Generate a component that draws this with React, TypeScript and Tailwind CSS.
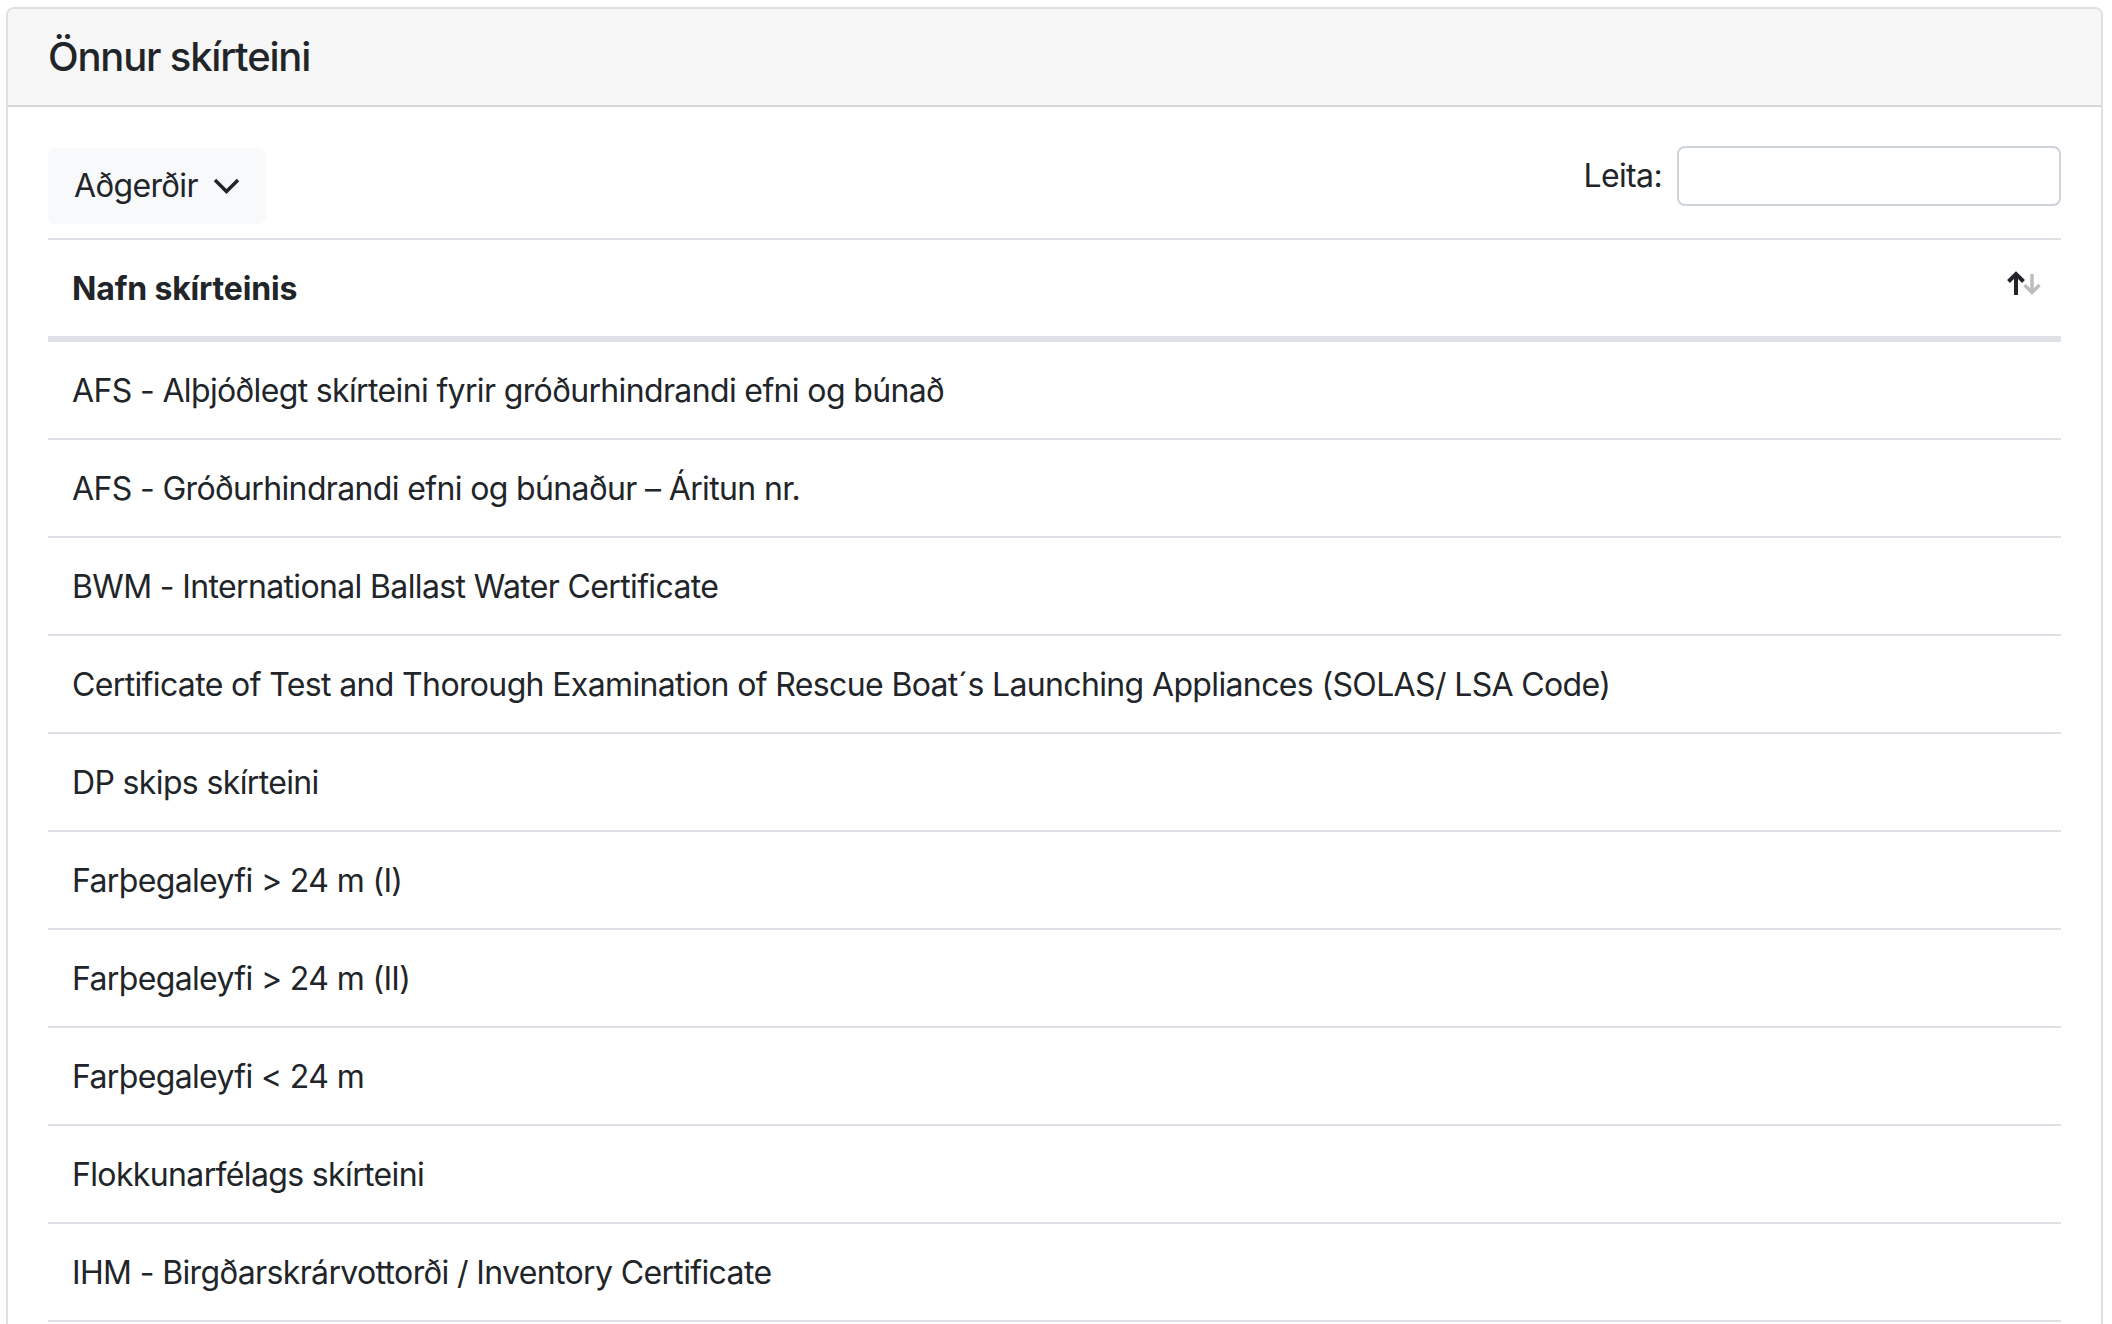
const rows = [
  'AFS - Alþjóðlegt skírteini fyrir gróðurhindrandi efni og búnað',
  'AFS - Gróðurhindrandi efni og búnaður – Áritun nr.',
  'BWM - International Ballast Water Certificate',
  'Certificate of Test and Thorough Examination of Rescue Boat´s Launching Appliances (SOLAS/ LSA Code)',
  'DP skips skírteini',
  'Farþegaleyfi > 24 m (I)',
  'Farþegaleyfi > 24 m (II)',
  'Farþegaleyfi < 24 m',
  'Flokkunarfélags skírteini',
  'IHM - Birgðarskrárvottorði / Inventory Certificate',
];

function SortArrows() {
  return (
    <div aria-hidden="true" className="mb-[12px] mr-[-6px] flex items-end">
      <svg width="20" height="24" viewBox="0 0 20 24" fill="none">
        <path d="M10 24V3" stroke="#212529" strokeWidth="4" />
        <path d="M2.5 10.5L10 3l7.5 7.5" stroke="#212529" strokeWidth="4" />
      </svg>
      <svg width="22" height="21" viewBox="0 0 22 21" fill="none" className="-ml-[5px]">
        <path d="M11 0v18.5" stroke="#bdbdbd" strokeWidth="3.5" />
        <path d="M3.5 11l7.5 7.5 7.5-7.5" stroke="#bdbdbd" strokeWidth="3.5" />
      </svg>
    </div>
  );
}

export default function App() {
  return (
    <div
      className="min-h-screen bg-white pl-[6px] pr-[9px] pt-[7px] text-[#212529]"
      style={{ fontFamily: 'Inter, "Noto Sans", sans-serif' }}
    >
      <div className="overflow-hidden rounded-[8px] border-2 border-[#e0e0e0]">
        <div className="border-b-2 border-[#d6d6d6] bg-[#f7f7f7] px-[40px] py-[24px]">
          <h5 className="text-[40px] font-medium leading-[48px] tracking-[-0.03em]">Önnur skírteini</h5>
        </div>

        <div className="px-[40px] pb-[60px] pt-[41px]">
          <div className="flex items-start justify-between">
            <button className="flex h-[76px] items-center rounded-[8px] border-2 border-[#f8f9fa] bg-[#f8f9fa] px-[24px] text-[32px] leading-[48px] tracking-[-0.02em]">
              Aðgerðir
              <svg width="27" height="16" viewBox="0 0 27 16" fill="none" className="ml-[15px]">
                <path d="M2 2l11.5 11.5L25 2" stroke="#212529" strokeWidth="3.5" />
              </svg>
            </button>

            <label className="-mt-[2px] flex items-center text-[32px] leading-[60px] tracking-[-0.02em]">
              Leita:
              <input
                type="search"
                className="ml-[15px] h-[60px] w-[384px] rounded-[8px] border-2 border-[#ced4da] bg-white px-[16px] text-[28px] outline-none"
              />
            </label>
          </div>

          <table className="mt-[14px] w-full border-collapse text-[32px] leading-[48px] tracking-[-0.02em]">
            <thead>
              <tr>
                <th className="border-b-[6px] border-t-2 border-[#dee2e6] px-[24px] pb-[23px] pt-[25px] text-left font-bold tracking-[-0.005em]">
                  <div className="flex items-center justify-between">
                    <span>Nafn skírteinis</span>
                    <SortArrows />
                  </div>
                </th>
              </tr>
            </thead>
            <tbody>
              {rows.map((r) => (
                <tr key={r}>
                  <td className="border-b-2 border-[#dee2e6] px-[24px] pb-[23px] pt-[25px]">{r}</td>
                </tr>
              ))}
            </tbody>
          </table>
        </div>
      </div>
    </div>
  );
}
